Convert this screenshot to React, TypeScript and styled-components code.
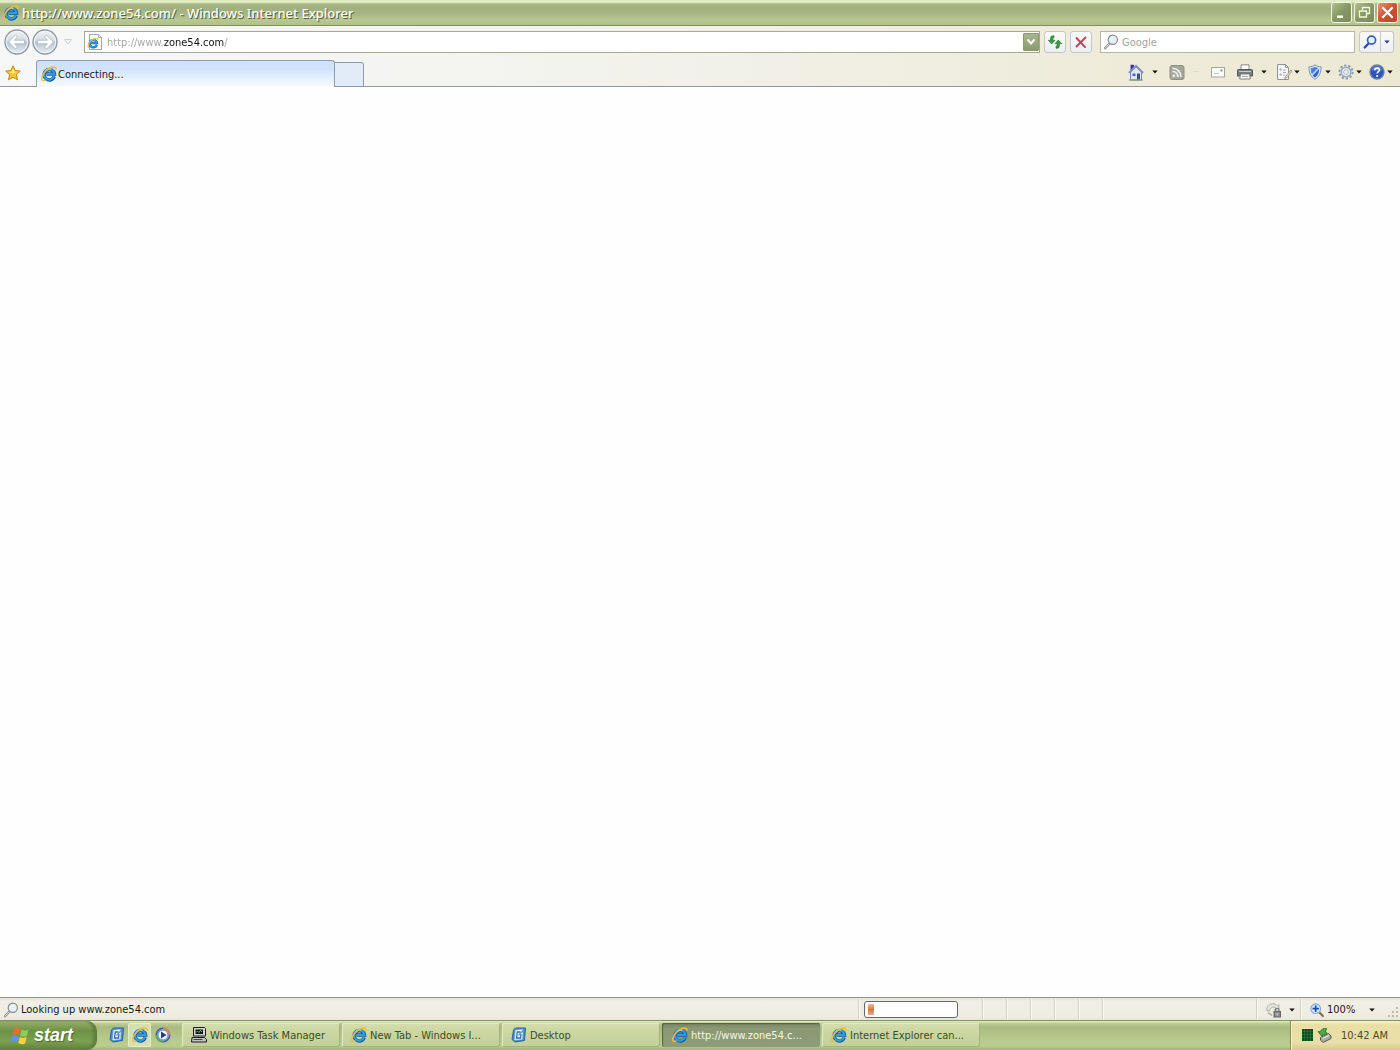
import React from "react";
import styled, { createGlobalStyle, css } from "styled-components";

const UI = `"DejaVu Sans Condensed", "Noto Sans", sans-serif`;

const Global = createGlobalStyle`
  *, *::before, *::after { box-sizing: border-box; }
  body { margin: 0; background: #fff; font-family: ${UI}; font-size: 11px; color: #1a1a1a; }
  button, input { font-family: inherit; font-size: inherit; color: inherit; }
  svg { display: block; flex: none; }
`;

const bare = css`
  border: 0;
  padding: 0;
  background: none;
  display: flex;
  align-items: center;
`;

const Desktop = styled.div`
  height: 100vh;
  display: flex;
  flex-direction: column;
  overflow: hidden;
`;

/* ---------- title bar ---------- */
const TitleBar = styled.header`
  height: 26px;
  flex: none;
  display: flex;
  align-items: center;
  gap: 3px;
  padding: 0 2px 0 3px;
  border-bottom: 1px solid #7f8e62;
  background: linear-gradient(#dfeabc 0, #e4efc4 2px, #a9b787 4px, #a2b07f 9px, #a9b786 14px, #b9c892 20px, #b3c28c 24px);
`;
const Title = styled.h1`
  flex: 1;
  margin: 0;
  font-family: "Noto Sans", "Open Sans", sans-serif;
  font-size: 13px;
  line-height: 18px;
  font-weight: 500;
  color: #fdfef4;
  text-shadow: 1px 1px 0 #56643b;
  white-space: nowrap;
`;
const WindowButtons = styled.div`
  display: flex;
  gap: 2px;
`;
const WindowButton = styled.button<{ $close?: boolean }>`
  ${bare}
  width: 21px;
  height: 21px;
  justify-content: center;
  border: 1px solid #f3f7e2;
  border-radius: 3px;
  background: ${(p) =>
    p.$close
      ? "linear-gradient(135deg, #e59378, #cf4f33 50%, #c4432b)"
      : "linear-gradient(135deg, #b3c08f, #869665 50%, #7c8c5d)"};
`;

/* ---------- toolbars ---------- */
const Chrome = styled.div`
  flex: none;
  background: linear-gradient(90deg, #f6f8f8 0, #f3f3ee 40%, #eeebd9 80%, #ece9d3 100%);
`;
const NavRow = styled.form`
  display: flex;
  align-items: center;
  gap: 4px;
  height: 32px;
  padding: 0 6px 0 4px;
`;
const History = styled.div`
  display: flex;
  align-items: center;
  width: 76px;
  gap: 2px;
`;
const HistoryButton = styled.button`
  ${bare}
`;
const AddressBox = styled.label`
  flex: 1;
  display: flex;
  align-items: center;
  gap: 4px;
  height: 22px;
  padding: 0 0 0 2px;
  border: 1px solid #a5a893;
  background: #fff;
`;
const AddressInput = styled.input`
  flex: 1;
  min-width: 0;
  height: 20px;
  padding: 0;
  border: 0;
  outline: 0;
  color: #111;
  background: linear-gradient(90deg, #a0a0a0 57px, #111 57px, #111 117px, #a0a0a0 117px);
  background-clip: text;
  -webkit-background-clip: text;
  -webkit-text-fill-color: transparent;
`;
const AddressDrop = styled.button`
  ${bare}
  width: 16px;
  height: 18px;
  justify-content: center;
  border: 1px solid #8b9773;
  border-radius: 1px;
  background: linear-gradient(#a9b68c, #8c9b6e);
`;
const ToolButton = styled.button`
  ${bare}
  width: 22px;
  height: 22px;
  justify-content: center;
  border: 1px solid #c3c7cb;
  border-radius: 3px;
  background: linear-gradient(#fbfbf8, #eceef2);
`;
const SearchBox = styled.label`
  display: flex;
  align-items: center;
  gap: 3px;
  width: 255px;
  height: 22px;
  margin-left: 4px;
  padding: 0 3px 0 2px;
  border: 1px solid #b5b6a8;
  background: #fff;
`;
const SearchInput = styled.input`
  flex: 1;
  min-width: 0;
  height: 20px;
  padding: 0;
  border: 0;
  outline: 0;
  background: transparent;
  &::placeholder { color: #a3a39c; opacity: 1; }
`;
const ToolGap = styled.div`
  display: flex;
`;
const SearchButton = styled(ToolButton)`
  border-radius: 3px 0 0 3px;
`;
const SearchMenu = styled(ToolButton)`
  width: 13px;
  border-left: 0;
  border-radius: 0 3px 3px 0;
`;

const TabRow = styled.div`
  display: flex;
  height: 29px;
  align-items: stretch;
`;
const Favorites = styled.button`
  ${bare}
  width: 36px;
  padding: 1px 0 0 5px;
  border-bottom: 1px solid #9498a0;
`;
const Tab = styled.button`
  ${bare}
  width: 299px;
  gap: 1px;
  margin-top: 2px;
  padding: 0 0 0 4px;
  border: 1px solid #8d9cae;
  border-bottom: 0;
  border-radius: 3px 3px 0 0;
  background: linear-gradient(#cfe1fb 0, #d0e2fc 8px, #e8f1fe 18px, #fbfdff 27px);
`;
const NewTab = styled.button`
  ${bare}
  width: 29px;
  margin-top: 4px;
  border: 1px solid #8d9cae;
  border-left: 0;
  border-radius: 0 3px 0 0;
  background: #e2ebf8;
`;
const Commands = styled.div`
  flex: 1;
  display: flex;
  align-items: center;
  justify-content: flex-end;
  padding: 0 7px 0 0;
  gap: 7px;
  border-bottom: 1px solid #9498a0;
`;
const WideCommands = styled.div`
  display: flex;
  gap: 11px;
  margin-right: 2px;
`;
const Command = styled.button<{ $wide?: boolean }>`
  ${bare}
  gap: ${(p) => (p.$wide ? 8 : 2)}px;
`;

const Page = styled.main`
  flex: 1;
  min-height: 0;
  background: #fefefe;
`;

/* ---------- status bar ---------- */
const StatusBar = styled.footer`
  flex: none;
  display: flex;
  align-items: stretch;
  height: 23px;
  border-top: 1px solid #96968e;
  background: linear-gradient(#e2dfd3 0, #f1efe5 3px, #efece2 18px, #e9e6d8 22px);
`;
const StatusText = styled.div`
  flex: 1;
  display: flex;
  align-items: center;
  gap: 2px;
  padding: 1px 0 0 3px;
`;
const Cell = styled.div<{ $w: number }>`
  width: ${(p) => p.$w}px;
  display: flex;
  align-items: center;
  margin: 1px 0;
  padding-top: 1px;
  border-left: 1px solid #d3d0c2;
  box-shadow: inset 1px 0 0 #fbfaf4;
`;
const Progress = styled.div`
  width: 94px;
  height: 17px;
  margin-left: 5px;
  padding: 2px 3px;
  border: 1px solid #63676b;
  border-radius: 3px;
  background: #fff;
`;
const ProgressBlock = styled.div`
  width: 6px;
  height: 11px;
  background: linear-gradient(#eebd9b, #d8763f 50%, #e8ac86);
`;
const StatusButton = styled.button<{ $gap: number }>`
  ${bare}
  gap: ${(p) => p.$gap}px;
  padding-left: 9px;
`;
const ZoomLabel = styled.span`
  display: flex;
  align-items: center;
  gap: 3px;
`;
const Grip = styled.div`
  flex: 1;
  display: flex;
  justify-content: flex-end;
  align-self: flex-end;
`;

/* ---------- task bar ---------- */
const TaskBar = styled.nav`
  flex: none;
  display: flex;
  height: 30px;
  border-top: 1px solid #839565;
  background: linear-gradient(#e9f1c6 0, #c2cf99 2px, #a9bb80 6px, #b5c78b 16px, #bccd91 25px, #9fb175 29px);
`;
const Start = styled.button`
  ${bare}
  width: 97px;
  gap: 4px;
  padding: 0 0 1px 10px;
  border-right: 1px solid #5f7b3c;
  border-radius: 0 10px 10px 0;
  background: linear-gradient(#a4b87b 0, #8ba75f 3px, #6d9147 10px, #7ba153 20px, #5f803b 29px);
  box-shadow: inset -3px 0 3px #5e8038;
  color: #fff;
  font-family: "Liberation Sans", sans-serif;
  font-size: 18px;
  line-height: 22px;
  font-style: italic;
  font-weight: 700;
  text-shadow: 1px 1px 1px #4a6529;
`;
const Quick = styled.div`
  width: 85px;
  display: flex;
  align-items: center;
  padding: 0 0 1px 8px;
`;
const QuickButton = styled.button<{ $lit?: boolean }>`
  ${bare}
  width: 23px;
  height: 24px;
  justify-content: center;
  ${(p) => p.$lit && "background: #d6dfb2; box-shadow: inset 0 0 0 1px #e5edc4; border-radius: 2px;"}
`;
const Tasks = styled.div`
  flex: 1;
  min-width: 0;
  display: flex;
  gap: 2px;
  padding: 2px 0 3px;
`;
const Task = styled.button<{ $active?: boolean }>`
  ${bare}
  width: 158px;
  gap: 3px;
  padding: 0 8px 0 9px;
  border-radius: 2px;
  white-space: nowrap;
  color: ${(p) => (p.$active ? "#f4f7e9" : "#3f4a27")};
  background: ${(p) =>
    p.$active ? "linear-gradient(#74805f, #8b9874 5px, #8f9c78)" : "linear-gradient(#d5deae, #ccd7a3 8px, #c2cf98)"};
  box-shadow: ${(p) =>
    p.$active
      ? "inset 1px 1px 1px #566042"
      : "inset 1px 1px 0 #e4ebc4, inset -1px -1px 0 #a5b47d"};
  ${(p) => p.$active && "padding-left: 10px;"}
`;
const Tray = styled.div`
  width: 110px;
  display: flex;
  align-items: center;
  padding: 0 0 1px 11px;
  gap: 4px;
  border-left: 1px solid #8b8c52;
  background: linear-gradient(#f8f1c6 0, #e9dfa6 4px, #e8dfa7 22px, #d5ca8c 29px);
  box-shadow: inset 1px 0 0 #f7f2cf;
  color: #4b4a24;
`;
const Clock = styled.time`
  margin-left: 5px;
  white-space: nowrap;
`;

/* ---------- drawings ---------- */
const IEMark = () => (
  <g transform="translate(0 -.8)">
    <path d="M13.300 11.200A5.200 5.200 0 1 1 13.500 8.800H5.500" fill="none" stroke="#155a9e" strokeWidth="3.400" />
    <path d="M13 11A5.200 5.200 0 1 1 13.300 8.800H5.500" fill="none" stroke="#2f9be8" strokeWidth="2.200" />
    <path d="M4 6.500a5 5 0 0 1 6.500-2.300" fill="none" stroke="#92dcff" strokeWidth="1.200" />
    <path d="M15 4.500C15.600 1 11 1.200 7 4 3 6.900-.2 12.100 1 14.600c.6 1.200 2.200.8 3.500 0" fill="none" stroke="#f0bd35" strokeWidth="1.500" />
  </g>
);
const IE = () => (
  <svg width="16" height="16" viewBox="0 0 16 16" aria-hidden="true"><IEMark /></svg>
);
const PageIE = () => (
  <svg width="16" height="16" viewBox="0 0 16 16" aria-hidden="true">
    <path d="M2.500.5h9l3 3v12h-12z" fill="#fff" stroke="#a3a8ae" />
    <path d="M11.500.5v3h3" fill="#e6e9ee" stroke="#a3a8ae" />
    <g transform="translate(.5 3.500) scale(.7)"><IEMark /></g>
  </svg>
);
const Arrow = ({ color = "#111" }: { color?: string }) => (
  <svg width="6" height="4" viewBox="0 0 6 4" aria-hidden="true">
    <path d="M.3.5h5.400L3 3.500z" fill={color} />
  </svg>
);
const HistoryArrow = ({ back }: { back?: boolean }) => (
  <svg width="26" height="26" viewBox="0 0 26 26" aria-hidden="true">
    <defs>
      <linearGradient id={back ? "hb" : "hf"} x1="0" y1="0" x2="0" y2="1">
        <stop offset="0" stopColor="#f2f5f8" />
        <stop offset=".45" stopColor="#d3dae1" />
        <stop offset=".5" stopColor="#b6c1cc" />
        <stop offset="1" stopColor="#e9f1f6" />
      </linearGradient>
    </defs>
    <circle cx="13" cy="13" r="12" fill={`url(#${back ? "hb" : "hf"})`} stroke="#8e98a5" strokeWidth="1.300" />
    <circle cx="13" cy="13" r="10.700" fill="none" stroke="#f5f8fa" />
    <path
      d="M4.500 13L11.500 6l2 2-3 3.200h10v3.600h-10l3 3.200-2 2z"
      transform={back ? undefined : "matrix(-1 0 0 1 26 0)"}
      fill="#fff"
      stroke="#a7b2be"
      strokeWidth=".8"
    />
  </svg>
);
const Magnifier = ({ blue, size = 16 }: { blue?: boolean; size?: number }) => (
  <svg width={size} height={size} viewBox="0 0 16 16" aria-hidden="true">
    <path d="M6.800 9.200L2 14.300" stroke={blue ? "#2447b8" : "#8a8a8a"} strokeWidth={blue ? 2.600 : 2.400} strokeLinecap="round" />
    {!blue && <path d="M6.500 9.600L2 14.300" stroke="#e8e8e8" strokeLinecap="round" />}
    <circle cx="9.800" cy="5.800" r="4.600" fill={blue ? "#e4effc" : "#e8f0f4"} stroke={blue ? "#3159cc" : "#858b91"} strokeWidth={blue ? 1.900 : 1.200} />
    <path d="M7.500 5.500a2.500 2.500 0 0 1 2.300-2.200" fill="none" stroke="#fff" />
  </svg>
);
const Refresh = () => (
  <svg width="16" height="16" viewBox="0 0 16 16" aria-hidden="true">
    <g fill="#3e9a41" stroke="#227128" strokeWidth=".6">
      <path d="M7 1.800H5.700Q3.600 1.800 3.600 4v2.300H1.200L4.700 10 8 6.300H5.800V4.500Q5.800 3.800 7 3.800z" />
      <path d="M9 14.200h1.300q2.100 0 2.100-2.200V9.700h2.400L11.300 6 8 9.700h2.200v1.800q0 .7-1.200.7z" />
    </g>
  </svg>
);
const Cross = () => (
  <svg width="14" height="14" viewBox="0 0 14 14" aria-hidden="true">
    <path d="M2.500 3L11 12M11.500 2.500L2.500 11.500" stroke="#c9405a" strokeWidth="1.900" strokeLinecap="round" />
  </svg>
);
const Star = () => (
  <svg width="16" height="16" viewBox="0 0 16 16" aria-hidden="true">
    <path d="M8 .8l2.100 4.800 5.200.5-3.900 3.500 1.100 5.200L8 12.200l-4.500 2.600 1.100-5.200L.7 6.100l5.200-.5z" fill="#fbc62d" stroke="#c58413" strokeLinejoin="round" />
    <path d="M8 3l1.300 3.500 3 .3L8 8.500 4.500 7l2.200-.5z" fill="#ffe98a" />
  </svg>
);
const Home = () => (
  <svg width="16" height="17" viewBox="0 0 16 17" aria-hidden="true">
    <path d="M2.500.8h3.500v5l-3.500 3z" fill="#3c36a5" />
    <path d="M2.500 8L8 2.800 13.500 8v8h-11z" fill="#dce6f5" stroke="#7187b5" />
    <path d="M.8 8.800L8 1.800l7.200 7" fill="none" stroke="#7c8fc0" strokeWidth="1.700" />
    <path d="M9 9.500h3v6H9z" fill="#2b5596" />
    <path d="M4.500 9.500h3V12h-3z" fill="#456fae" />
    <path d="M1 16h14" stroke="#7d9470" />
  </svg>
);
const Rss = () => (
  <svg width="16" height="16" viewBox="0 0 16 16" aria-hidden="true">
    <rect x="1" y="1.500" width="14" height="14" rx="2" fill="#a6a79b" stroke="#8f9086" />
    <circle cx="4.800" cy="11.800" r="1.400" fill="#f5f5ee" />
    <path d="M3.500 7.500a5 5 0 0 1 5.300 5.500M3.500 4.300a8.500 8.500 0 0 1 8.500 8.700" fill="none" stroke="#f5f5ee" strokeWidth="1.600" />
  </svg>
);
const Mail = () => (
  <svg width="16" height="16" viewBox="0 0 16 16" aria-hidden="true">
    <rect x="1.500" y="3.500" width="13" height="9.500" fill="#fbfbf9" stroke="#a6a49c" />
    <path d="M10.500 5.500h2v2h-2z" fill="#8f8f93" />
    <path d="M4 9.500h5" stroke="#c4c4c2" />
  </svg>
);
const Printer = () => (
  <svg width="16" height="16" viewBox="0 0 16 16" aria-hidden="true">
    <path d="M4 .8h8V6H4z" fill="#fafafa" stroke="#8e8e8e" />
    <path d="M1.500 5.500h13a1 1 0 0 1 1 1V12H.5V6.500a1 1 0 0 1 1-1z" fill="#77797c" stroke="#55575a" />
    <path d="M2 7.500h12" stroke="#c9cbcd" />
    <path d="M3.500 10h9l.8 5H2.700z" fill="#f6f6f6" stroke="#808284" />
    <path d="M5 12.500h6" stroke="#b0b0b0" />
  </svg>
);
const PageTool = () => (
  <svg width="16" height="16" viewBox="0 0 16 16" aria-hidden="true">
    <path d="M1.500.5h8l3 3v12h-11z" fill="#f8f8f6" stroke="#8f949b" />
    <path d="M9.500.5v3h3" fill="none" stroke="#8f949b" />
    <path d="M3.500 4.500h2v2h-2zM3.500 9.500h2v2h-2z" fill="#9ea5b4" />
    <path d="M7 6h3M7 8.500h3M7 11h2" stroke="#a3a8b3" />
    <path d="M15 6L9.500 12.500l-.8 2.200 2.200-1L15.800 7.500z" fill="#e2dfc6" stroke="#85816d" strokeWidth=".7" />
  </svg>
);
const Shield = () => (
  <svg width="16" height="16" viewBox="0 0 16 16" aria-hidden="true">
    <path d="M8 .8C6.200 2.300 4.200 2.800 2 2.800c-.2 5.500 1.500 10 6 12.500 4.500-2.500 6.200-7 6-12.500-2.200 0-4.200-.5-6-2z" fill="#dfeafa" stroke="#7890c0" />
    <path d="M8 2.800c-1.300 1-2.700 1.400-4.200 1.500 0 2.300.3 4.400 1.200 6.200L11.500 4C10 3.800 9 3.400 8 2.800z" fill="#4b7fe8" />
    <path d="M12.200 4.500L5.500 11.500c.7.800 1.500 1.400 2.500 1.900 3-1.900 4.200-4.900 4.200-8.900z" fill="#3560cc" />
    <path d="M11.800 4L5.200 11" stroke="#bcd4fa" strokeWidth="1.200" />
  </svg>
);
const Gear = () => (
  <svg width="16" height="16" viewBox="0 0 16 16" aria-hidden="true">
    <circle cx="8" cy="8" r="6.600" fill="none" stroke="#8d9bb6" strokeWidth="2" strokeDasharray="2.300 1.850" />
    <circle cx="8" cy="8" r="4.800" fill="#e3eaf4" stroke="#9aa8c4" strokeWidth="1.600" />
    <circle cx="8" cy="8" r="2.300" fill="#f3f1e3" stroke="#a0aecb" strokeWidth=".8" />
  </svg>
);
const Help = () => (
  <svg width="16" height="16" viewBox="0 0 16 16" aria-hidden="true">
    <circle cx="8" cy="8" r="7" fill="#2c55b5" stroke="#6c7fae" strokeWidth="1.300" />
    <path d="M2.800 6.500a5.300 5.300 0 0 1 10.400 0z" fill="#5c85d6" />
    <path d="M5.800 6.300c0-3 4.600-3 4.600-.3 0 1.500-2.200 1.700-2.200 3.500" fill="none" stroke="#fff" strokeWidth="1.600" />
    <circle cx="8.200" cy="12" r="1.100" fill="#fff" />
  </svg>
);
const Privacy = () => (
  <svg width="16" height="16" viewBox="0 0 16 16" aria-hidden="true">
    <path d="M1 9a6 6 0 0 1 10.500-5.200L13 2.500V8H8l2-2A4 4 0 0 0 3.500 9z" fill="#e1e1dd" stroke="#aaa9a3" strokeWidth=".8" />
    <path d="M2 10.500l4 3" stroke="#aaa9a3" strokeWidth="1.500" />
    <rect x="8" y="9.500" width="6.500" height="5.500" fill="#8c8d90" stroke="#65666a" />
    <path d="M9.500 9.500V8a1.700 1.700 0 0 1 3.500 0v1.500" fill="none" stroke="#77787b" strokeWidth="1.200" />
    <path d="M11.200 11.300v2" stroke="#ececec" />
  </svg>
);
const ZoomIn = () => (
  <svg width="14" height="14" viewBox="0 0 13 13" aria-hidden="true">
    <path d="M8 8l4 4" stroke="#8c6d4a" strokeWidth="2" strokeLinecap="round" />
    <circle cx="5.300" cy="5.300" r="4.500" fill="#d9ecff" stroke="#7fa6da" />
    <path d="M5.300 2.300v6M2.300 5.300h6" stroke="#1c4fae" strokeWidth="1.700" />
  </svg>
);
const GripDots = () => (
  <svg width="12" height="12" viewBox="0 0 12 12" aria-hidden="true">
    <path d="M8 0h2v2H8zM4 4h2v2H4zM8 4h2v2H8zM0 8h2v2H0zM4 8h2v2H4zM8 8h2v2H8z" fill="#bdb9a6" />
  </svg>
);
const Flag = () => (
  <svg width="20" height="19" viewBox="0 0 18 17" aria-hidden="true">
    <path d="M3.500 2.200C5.500 1 7.400 1.200 9.200 2.500L7.900 8C6.100 6.900 4.300 6.800 2.200 7.900z" fill="#ee6a33" />
    <path d="M10.300 3.100c2 1.200 4 1.200 6.300.1L15.200 9c-2.100 1-4.100.9-6.100-.3z" fill="#8fce46" />
    <path d="M2 9c2-1.100 3.900-1 5.700.2l-1.300 5.300c-1.800-1.100-3.700-1.200-5.700-.1z" fill="#5b95ee" />
    <path d="M8.800 9.900c2 1.200 4 1.200 6.200.2l-1.400 5.500c-2.100 1-4.100.9-6.100-.3z" fill="#fbd338" />
  </svg>
);
const ShowDesktop = () => (
  <svg width="16" height="16" viewBox="0 0 16 16" aria-hidden="true">
    <path d="M4.500 1h10l-1 12.500-9.500 1.500-3-2.500L2.500 3z" fill="#4a8fd0" stroke="#27629f" strokeLinejoin="round" />
    <path d="M4.500 3.200l7.500-.7-.8 9.700-7.500.8z" fill="#f4faff" stroke="#b8d4ec" strokeWidth=".6" />
    <path d="M9.500 5H6.300L5.500 11h4l.5-4" fill="none" stroke="#2d6db2" strokeWidth="1.300" />
    <path d="M7.500 8.500l5.500-6" stroke="#5b93c6" strokeWidth="1.200" />
  </svg>
);
const Player = () => (
  <svg width="16" height="16" viewBox="0 0 16 16" aria-hidden="true">
    <circle cx="8" cy="8" r="6.600" fill="#f5f8fd" stroke="#3764b8" strokeWidth="1.800" />
    <path d="M8 1.400A6.600 6.600 0 0 1 14.600 8" fill="none" stroke="#e58a35" strokeWidth="1.800" />
    <path d="M1.400 8A6.600 6.600 0 0 0 8 14.600" fill="none" stroke="#5fae4e" strokeWidth="1.800" />
    <circle cx="8" cy="8" r="5" fill="#f4f7fc" stroke="#3c5cae" strokeWidth=".8" />
    <path d="M6 4.500v7L11.500 8z" fill="#26398f" />
  </svg>
);
const Computer = () => (
  <svg width="16" height="16" viewBox="0 0 16 16" aria-hidden="true">
    <path d="M2.500.5h11l1 1V9h-12z" fill="#d4d4d4" stroke="#1b1b1b" />
    <path d="M4.500 2.500h7.500v4.500H4.500z" fill="#0b1510" />
    <path d="M5 5.500l1.500-1.500 1.500 1.500 1.500-2 1.500 1.500" fill="none" stroke="#62c471" />
    <path d="M1 10.500h12.500l2 2v2.500H.5z" fill="#c2c2c2" stroke="#1b1b1b" />
    <path d="M2.500 12.500h9" stroke="#444" />
  </svg>
);
const CpuMeter = () => (
  <svg width="11" height="12" viewBox="0 0 11 12" aria-hidden="true">
    <path d="M0 0h11v12H0z" fill="#0f4d20" />
    <path d="M0 2.500h11M0 5.500h11M0 8.500h11M2.500 0v12M5.500 0v12M8.500 0v12" stroke="#2c8442" strokeWidth=".5" />
  </svg>
);
const Remove = () => (
  <svg width="15" height="16" viewBox="0 0 15 16" aria-hidden="true">
    <path d="M3.500 10.500l8-4 2.500 2.500v2.500l-8 4-2.500-2.500z" fill="#aaaca8" stroke="#56584f" />
    <path d="M5.500 11.500l6.500-3" stroke="#ececea" />
    <path d="M9.500 1.500L8.500 5l1.800 1.300L4.500 9 1 4.500l2 .3C4.500 2 6.500 1 9.500 1.500z" fill="#45ac45" stroke="#217125" strokeWidth=".8" />
  </svg>
);

const tasks: { label: string; icon: React.ReactNode; active?: boolean }[] = [
  { label: "Windows Task Manager", icon: <Computer /> },
  { label: "New Tab - Windows I...", icon: <IE /> },
  { label: "Desktop", icon: <ShowDesktop /> },
  { label: "http://www.zone54.c...", icon: <IE />, active: true },
  { label: "Internet Explorer can...", icon: <IE /> },
];

export default function App() {
  return (
    <Desktop>
      <Global />
      <TitleBar>
        <IE />
        <Title>http://www.zone54.com/ - Windows Internet Explorer</Title>
        <WindowButtons>
          <WindowButton aria-label="Minimize">
            <svg width="13" height="13" viewBox="0 0 13 13"><path d="M2 9.500h6v2.500H2z" fill="#fff" /></svg>
          </WindowButton>
          <WindowButton aria-label="Restore">
            <svg width="13" height="13" viewBox="0 0 13 13">
              <path d="M4.500 4V1.500h7v6H9M1.500 5h7v6h-7z" fill="none" stroke="#f4f7e8" strokeWidth="1.300" />
            </svg>
          </WindowButton>
          <WindowButton $close aria-label="Close">
            <svg width="15" height="15" viewBox="0 0 13 13"><path d="M2 2l9 9M11 2l-9 9" stroke="#fff" strokeWidth="2" /></svg>
          </WindowButton>
        </WindowButtons>
      </TitleBar>

      <Chrome>
        <NavRow onSubmit={(e) => e.preventDefault()}>
          <History>
            <HistoryButton type="button" aria-label="Back"><HistoryArrow back /></HistoryButton>
            <HistoryButton type="button" aria-label="Forward"><HistoryArrow /></HistoryButton>
            <HistoryButton type="button" aria-label="Recent pages">
              <svg width="16" height="8" viewBox="0 0 16 8"><path d="M4.500 1.500h7L8 6z" fill="#fafbfb" stroke="#c9cdd2" /></svg>
            </HistoryButton>
          </History>
          <AddressBox>
            <PageIE />
            <AddressInput aria-label="Address" defaultValue="http://www.zone54.com/" />
            <AddressDrop type="button" aria-label="Show addresses">
              <svg width="10" height="8" viewBox="0 0 10 8"><path d="M1.500 1.500L5 5.500l3.500-4" fill="none" stroke="#fff" strokeWidth="2" /></svg>
            </AddressDrop>
          </AddressBox>
          <ToolButton type="button" aria-label="Refresh"><Refresh /></ToolButton>
          <ToolButton type="button" aria-label="Stop"><Cross /></ToolButton>
          <SearchBox>
            <Magnifier />
            <SearchInput aria-label="Search" placeholder="Google" />
          </SearchBox>
          <ToolGap>
            <SearchButton aria-label="Search"><Magnifier blue size={14} /></SearchButton>
            <SearchMenu type="button" aria-label="Search options"><Arrow color="#26418f" /></SearchMenu>
          </ToolGap>
        </NavRow>

        <TabRow>
          <Favorites aria-label="Favorites"><Star /></Favorites>
          <Tab><IE />Connecting...</Tab>
          <NewTab aria-label="New tab" />
          <Commands>
            <WideCommands>
              <Command $wide aria-label="Home"><Home /><Arrow /></Command>
              <Command $wide aria-label="Feeds"><Rss /><svg width="6" height="4" viewBox="0 0 6 4"><path d="M0 1.500h6" stroke="#eed9bd" /></svg></Command>
              <Command aria-label="Read mail"><Mail /></Command>
              <Command $wide aria-label="Print"><Printer /><Arrow /></Command>
            </WideCommands>
            <Command aria-label="Page"><PageTool /><Arrow /></Command>
            <Command aria-label="Safety"><Shield /><Arrow /></Command>
            <Command aria-label="Tools"><Gear /><Arrow /></Command>
            <Command aria-label="Help"><Help /><Arrow /></Command>
          </Commands>
        </TabRow>
      </Chrome>

      <Page />

      <StatusBar>
        <StatusText><Magnifier />Looking up www.zone54.com</StatusText>
        <Cell $w={124}><Progress role="progressbar" aria-label="Loading"><ProgressBlock /></Progress></Cell>
        {[0, 1, 2, 3, 4].map((n) => <Cell key={n} $w={24} />)}
        <Cell $w={154} />
        <Cell $w={44}><StatusButton $gap={7} aria-label="Privacy"><Privacy /><Arrow /></StatusButton></Cell>
        <Cell $w={100}>
          <StatusButton $gap={14} aria-label="Zoom level"><ZoomLabel><ZoomIn />100%</ZoomLabel><Arrow /></StatusButton>
          <Grip><GripDots /></Grip>
        </Cell>
      </StatusBar>

      <TaskBar>
        <Start><Flag />start</Start>
        <Quick>
          <QuickButton aria-label="Show desktop"><ShowDesktop /></QuickButton>
          <QuickButton $lit aria-label="Internet Explorer"><IE /></QuickButton>
          <QuickButton aria-label="Media player"><Player /></QuickButton>
        </Quick>
        <Tasks>
          {tasks.map((t) => (
            <Task key={t.label} $active={t.active}>{t.icon}<span>{t.label}</span></Task>
          ))}
        </Tasks>
        <Tray><CpuMeter /><Remove /><Clock>10:42 AM</Clock></Tray>
      </TaskBar>
    </Desktop>
  );
}
